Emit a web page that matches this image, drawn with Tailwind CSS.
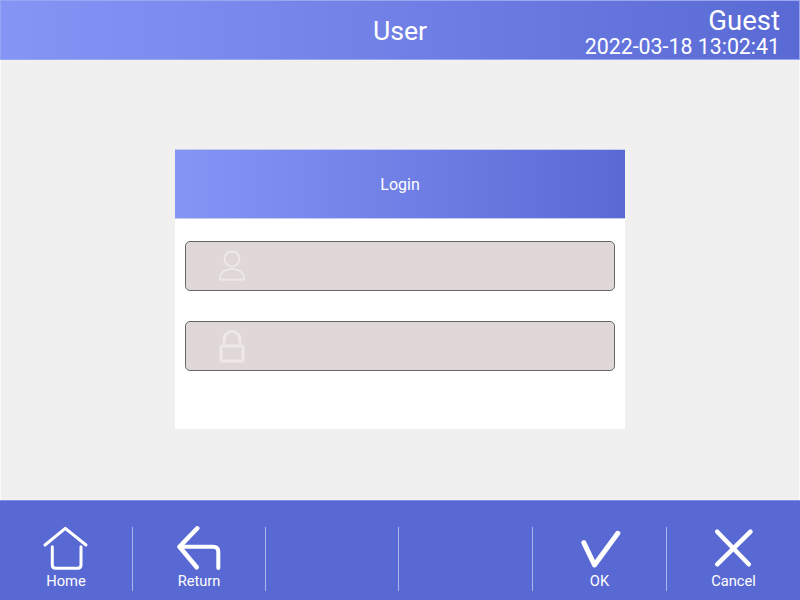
<!DOCTYPE html>
<html lang="en">
<head>
  <meta charset="UTF-8" />
  <title>User</title>
  <script src="https://cdn.jsdelivr.net/npm/@tailwindcss/browser@4"></script>
</head>
<body class="w-[800px] h-[600px] overflow-hidden flex flex-col bg-[#f0f0f0] font-['Roboto',sans-serif] text-white">

  <!-- Top bar -->
  <header class="relative h-[60px] shrink-0 flex items-center justify-center bg-linear-to-r/srgb from-[#8595f6] to-[#5a6ad4] border border-[#9aa6f0]">
    <span class="text-[26.670px] leading-none mt-[2px]">User</span>
    <div class="absolute right-[19px] top-[5px] flex flex-col items-end">
      <span class="text-[27.500px] leading-[30px]">Guest</span>
      <span class="text-[21.330px] leading-[22px]">2022-03-18 13:02:41</span>
    </div>
  </header>

  <!-- Login card -->
  <main class="flex-1 flex justify-center pt-[89px] border-x border-[#fafafa]">
    <div class="w-[450px] h-[280px] bg-white flex flex-col">
      <div class="h-[70px] flex items-center justify-center pt-[1px] bg-linear-to-r/srgb from-[#8595f6] to-[#5a6ad4] border-y border-[#c5cbf2] text-[16px]">Login</div>
      <div class="flex flex-col gap-[30px] px-[10px] pt-[22px]">
        <div class="h-[50px] flex items-center pl-[29px] bg-[#e0d7d7] border border-[#666] rounded-[5px]">
          <svg class="w-[34px] h-[34px]" viewBox="0 0 34 34" fill="none" stroke="#eee8e8" stroke-width="2">
            <circle cx="17" cy="10" r="7.500" />
            <path d="M5 29.500c0-6 5-9.500 12-9.500s12 3.500 12 9.500c0 .8-.5 1.300-1.300 1.300H6.300c-.8 0-1.300-.5-1.300-1.300z" />
          </svg>
        </div>
        <div class="h-[50px] flex items-center pl-[29px] bg-[#e0d7d7] border border-[#666] rounded-[5px]">
          <svg class="w-[34px] h-[34px]" viewBox="0 0 34 34" fill="none" stroke="#eee8e8" stroke-width="3">
            <path d="M9 17V10.500a8 8 0 0 1 16 0V17" />
            <rect x="6" y="17" width="22" height="15" rx="1.500" />
          </svg>
        </div>
      </div>
    </div>
  </main>

  <!-- Bottom toolbar -->
  <footer class="h-[100px] shrink-0 grid grid-cols-[133px_133px_133px_134px_134px_133px] pt-[26px] pb-[9px] bg-[#5969d3] border-t border-[#7f8de6]">
    <button class="flex flex-col items-center border-r border-white/50">
      <svg class="w-[60px] h-[46px] -mt-[3px]" viewBox="36 524 60 46" fill="none" stroke="#fff" stroke-width="3" stroke-linecap="round" stroke-linejoin="round">
        <path d="M45 545 65.300 528.300 86 545" />
        <path d="M52.300 546.700V565q0 3.300 3.300 3.300H77.700q3.300 0 3.300-3.300V546.700" />
      </svg>
      <span class="text-[14.670px] leading-[16px] mt-[3px]">Home</span>
    </button>
    <button class="flex flex-col items-center border-r border-white/50">
      <svg class="w-[60px] h-[46px] -mt-[3px]" viewBox="169 524 60 46" fill="none" stroke="#fff" stroke-width="4.500" stroke-linecap="round" stroke-linejoin="round">
        <path d="M197.300 528.300 179.500 546.700 196.700 567.300" />
        <path d="M179.500 546.700H213Q218.300 546.700 218.300 552V568" stroke-width="4" />
      </svg>
      <span class="text-[14.670px] leading-[16px] mt-[3px]">Return</span>
    </button>
    <div class="border-r border-white/50"></div>
    <div class="border-r border-white/50"></div>
    <button class="flex flex-col items-center border-r border-white/50">
      <svg class="w-[60px] h-[46px] -mt-[3px]" viewBox="569.500 524 60 46" fill="none" stroke="#fff" stroke-width="5" stroke-linecap="round" stroke-linejoin="round">
        <path d="M583.300 542.700 594 565 617.300 533.300" />
      </svg>
      <span class="text-[14.670px] leading-[16px] mt-[3px]">OK</span>
    </button>
    <button class="flex flex-col items-center">
      <svg class="w-[60px] h-[46px] -mt-[3px]" viewBox="703.500 524 60 46" fill="none" stroke="#fff" stroke-width="4.500" stroke-linecap="round" stroke-linejoin="round">
        <path d="M716.700 531.700 748.300 564.300" />
        <path d="M750 531.700 716.700 564.300" />
      </svg>
      <span class="text-[14.670px] leading-[16px] mt-[3px]">Cancel</span>
    </button>
  </footer>
</body>
</html>
